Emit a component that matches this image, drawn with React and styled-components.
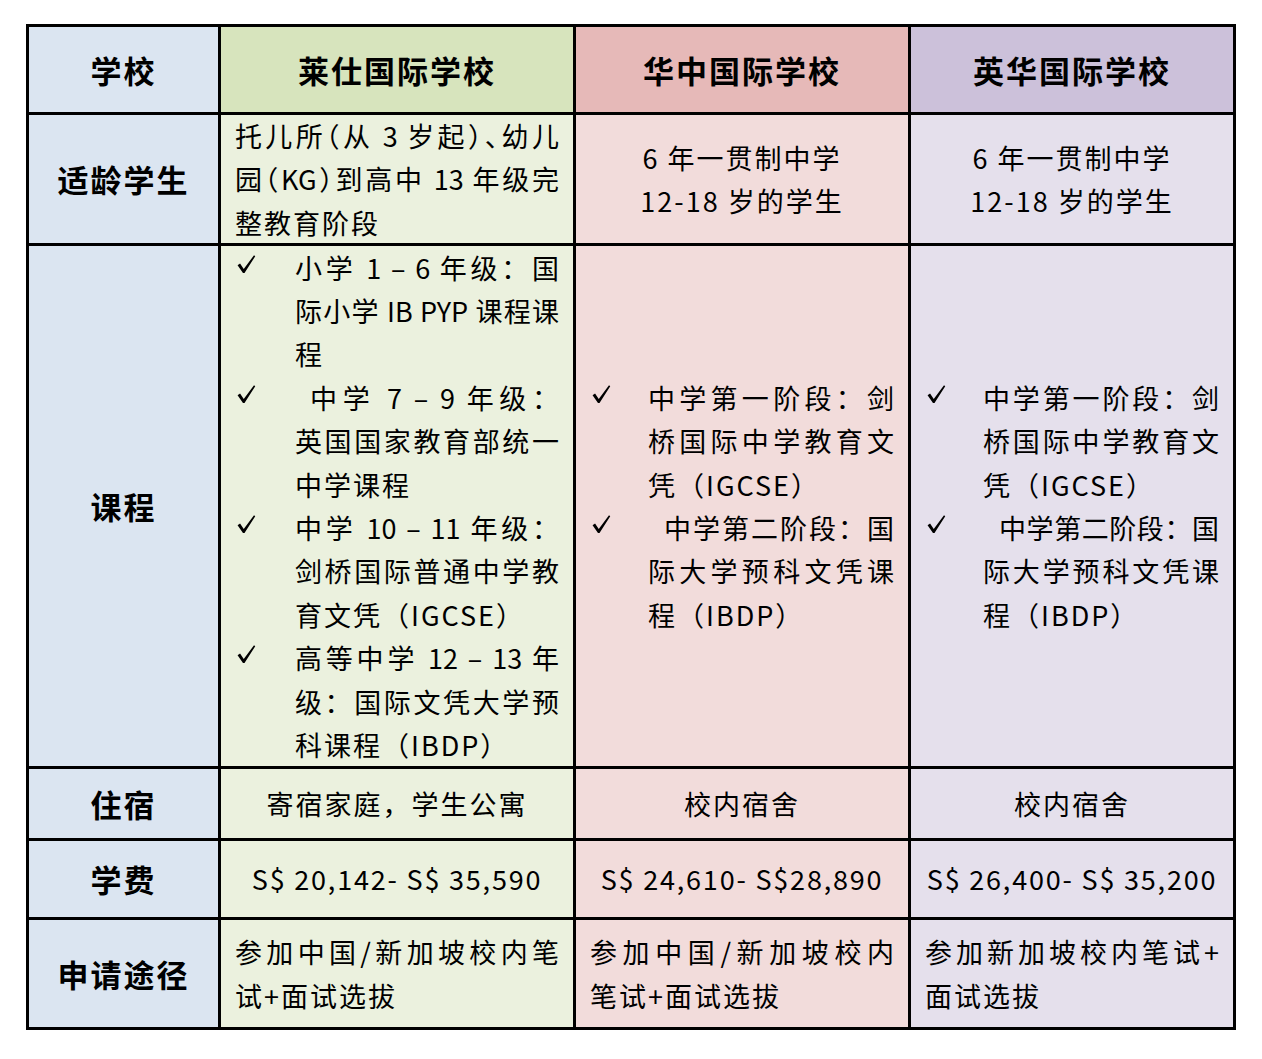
import React from "react";
import styled, { createGlobalStyle } from "styled-components";

const GlobalStyle = createGlobalStyle`
  html, body { margin: 0; padding: 0; background: #ffffff; }
  body {
    font-family: "Noto Sans CJK SC", "Noto Sans", "DejaVu Sans", sans-serif;
    color: #000000;
  }
`;

const TONES = {
  label: { head: "#dbe5f1", body: "#dbe5f1" },
  green: { head: "#d7e4bd", body: "#ebf1de" },
  red: { head: "#e6b9b8", body: "#f2dcdb" },
  purple: { head: "#ccc1da", body: "#e5e0ec" },
};

const Page = styled.div`
  padding: 24px 0 0 26px;
`;

const Sheet = styled.div`
  display: grid;
  grid-template-columns: 189px 352px 332px 322px;
  grid-template-rows: 85px 128px 520px 69px 76px 107px;
  gap: 3px;
  padding: 3px;
  width: max-content;
  background: #000000;
`;

const Cell = styled.div`
  background: ${(p) => p.$bg};
  display: flex;
  flex-direction: column;
  justify-content: center;
  padding: 0 14px;
  min-width: 0;
  text-align: ${(p) => (p.$center ? "center" : "left")};
`;

const Title = styled.span`
  display: block;
  font-size: 31px;
  font-weight: 700;
  letter-spacing: 2px;
  line-height: 40px;
  text-align: center;
`;

const Line = styled.span`
  display: block;
  font-size: 27px;
  line-height: 43.4px;
  white-space: ${(p) => (p.$justify ? "normal" : "nowrap")};
  letter-spacing: ${(p) => (p.$justify ? "0" : `${p.$spacing ?? 2}px`)};
  text-align: ${(p) => (p.$justify ? "justify" : "inherit")};
  text-align-last: ${(p) => (p.$justify ? "justify" : "auto")};
  font-feature-settings: ${(p) => (p.$compress ? '"halt"' : "normal")};
  padding-left: ${(p) => p.$indent || 0}px;
`;

const Item = styled.div`
  display: grid;
  grid-template-columns: ${(p) => p.$marker}px 1fr;
  align-items: start;
`;

const Mark = styled.svg`
  display: block;
  width: 19px;
  height: 20px;
  margin: 8px 0 0 2px;
`;

function Check() {
  return (
    <Mark viewBox="0 0 20 20" aria-hidden="true">
      <path
        d="M0.6 11.2 L3.2 9.4 L7.1 15.2 L17.9 0.9 L19.2 1.9 L7.9 19.4 L6.3 19.4 Z"
        fill="#000"
      />
    </Mark>
  );
}

function Paragraph({ lines, center, compress }) {
  return lines.map((text, i) => {
    const justify = !center && i < lines.length - 1;
    return (
      <Line key={i} $justify={justify} $compress={compress && justify}>
        {text}
      </Line>
    );
  });
}

function Checklist({ items, marker }) {
  return items.map((item, i) => (
    <Item key={i} $marker={marker}>
      <Check />
      <div>
        {item.lines.map((text, j) => (
          <Line
            key={j}
            $justify={j < item.lines.length - 1}
            $indent={j === 0 ? item.indent : 0}
          >
            {text}
          </Line>
        ))}
      </div>
    </Item>
  ));
}

const schools = [
  {
    name: "莱仕国际学校",
    tone: "green",
    marker: 60,
    age: {
      compress: true,
      lines: ["托儿所（从 3 岁起）、幼儿", "园（KG）到高中 13 年级完", "整教育阶段"],
    },
    courses: [
      { lines: ["小学 1 – 6 年级：国", "际小学 IB PYP 课程课", "程"] },
      { indent: 15, lines: ["中学 7 – 9 年级：", "英国国家教育部统一", "中学课程"] },
      { lines: ["中学 10 – 11 年级：", "剑桥国际普通中学教", "育文凭（IGCSE）"] },
      { lines: ["高等中学 12 – 13 年", "级：国际文凭大学预", "科课程（IBDP）"] },
    ],
    stay: "寄宿家庭，学生公寓",
    fee: "S$ 20,142- S$ 35,590",
    apply: ["参加中国/新加坡校内笔", "试+面试选拔"],
  },
  {
    name: "华中国际学校",
    tone: "red",
    marker: 58,
    age: { center: true, lines: ["6 年一贯制中学", "12-18 岁的学生"] },
    courses: [
      { lines: ["中学第一阶段：剑", "桥国际中学教育文", "凭（IGCSE）"] },
      { indent: 16, lines: ["中学第二阶段：国", "际大学预科文凭课", "程（IBDP）"] },
    ],
    stay: "校内宿舍",
    fee: "S$ 24,610- S$28,890",
    apply: ["参加中国/新加坡校内", "笔试+面试选拔"],
  },
  {
    name: "英华国际学校",
    tone: "purple",
    marker: 58,
    age: { center: true, lines: ["6 年一贯制中学", "12-18 岁的学生"] },
    courses: [
      { lines: ["中学第一阶段：剑", "桥国际中学教育文", "凭（IGCSE）"] },
      { indent: 16, lines: ["中学第二阶段：国", "际大学预科文凭课", "程（IBDP）"] },
    ],
    stay: "校内宿舍",
    fee: "S$ 26,400- S$ 35,200",
    apply: ["参加新加坡校内笔试+", "面试选拔"],
  },
];

const rows = [
  {
    label: "适龄学生",
    render: (s) => (
      <Paragraph lines={s.age.lines} center={s.age.center} compress={s.age.compress} />
    ),
    center: (s) => !!s.age.center,
  },
  {
    label: "课程",
    render: (s) => <Checklist items={s.courses} marker={s.marker} />,
    center: () => false,
  },
  { label: "住宿", render: (s) => <Line>{s.stay}</Line>, center: () => true },
  { label: "学费", render: (s) => <Line $spacing={1.8}>{s.fee}</Line>, center: () => true },
  { label: "申请途径", render: (s) => <Paragraph lines={s.apply} />, center: () => false },
];

export default function App() {
  return (
    <>
      <GlobalStyle />
      <Page>
        <Sheet>
          <Cell $bg={TONES.label.head} $center>
            <Title>学校</Title>
          </Cell>
          {schools.map((s) => (
            <Cell key={s.name} $bg={TONES[s.tone].head} $center>
              <Title>{s.name}</Title>
            </Cell>
          ))}
          {rows.map((row) => (
            <React.Fragment key={row.label}>
              <Cell $bg={TONES.label.body} $center>
                <Title>{row.label}</Title>
              </Cell>
              {schools.map((s) => (
                <Cell key={s.name} $bg={TONES[s.tone].body} $center={row.center(s)}>
                  {row.render(s)}
                </Cell>
              ))}
            </React.Fragment>
          ))}
        </Sheet>
      </Page>
    </>
  );
}
